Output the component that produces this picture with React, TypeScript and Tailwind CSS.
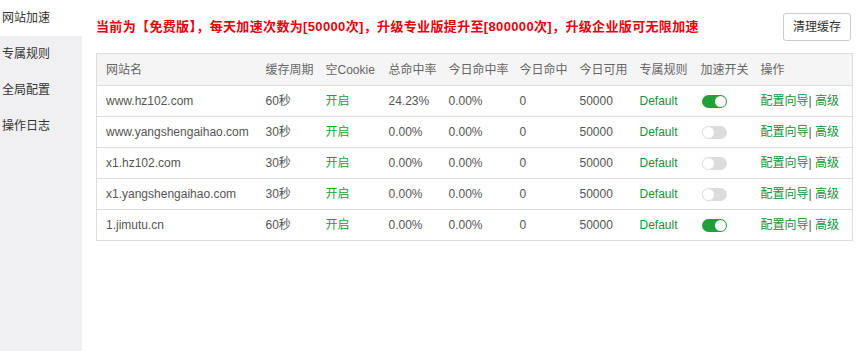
import React from 'react';

type Row = {
  name: string;
  period: string;
  total: string;
  today: string;
  hits: string;
  avail: string;
  on: boolean;
};

const rows: Row[] = [
  { name: 'www.hz102.com', period: '60秒', total: '24.23%', today: '0.00%', hits: '0', avail: '50000', on: true },
  { name: 'www.yangshengaihao.com', period: '30秒', total: '0.00%', today: '0.00%', hits: '0', avail: '50000', on: false },
  { name: 'x1.hz102.com', period: '30秒', total: '0.00%', today: '0.00%', hits: '0', avail: '50000', on: false },
  { name: 'x1.yangshengaihao.com', period: '30秒', total: '0.00%', today: '0.00%', hits: '0', avail: '50000', on: false },
  { name: '1.jimutu.cn', period: '60秒', total: '0.00%', today: '0.00%', hits: '0', avail: '50000', on: true },
];

const menu = ['网站加速', '专属规则', '全局配置', '操作日志'];

const headers = ['网站名', '缓存周期', '空Cookie', '总命中率', '今日命中率', '今日命中', '今日可用', '专属规则', '加速开关', '操作'];
const widths = ['w-[160px]', 'w-[60px]', 'w-[63px]', 'w-[60px]', 'w-[71px]', 'w-[60px]', 'w-[60px]', 'w-[61px]', 'w-[60px]', ''];

const Toggle = ({ on }: { on: boolean }) => (
  <span
    className={`relative inline-block w-[25px] h-[13px] rounded-full align-middle ${on ? 'bg-[#20a03a]' : 'bg-[#dcdcdc]'}`}
  >
    <span
      className={`absolute top-[1px] w-[11px] h-[11px] rounded-full bg-white ${on ? 'left-[13px]' : 'left-[1px]'}`}
    />
  </span>
);

const App: React.FC = () => {
  return (
    <div className="flex w-[866px] h-[351px] bg-white text-[12px] font-['Liberation_Sans','Noto_Sans_CJK_SC',sans-serif] text-[#555]">
      <aside className="w-[82px] shrink-0 bg-[#f0f0f2]">
        {menu.map((m, i) => (
          <div
            key={m}
            className={`h-[36px] leading-[36px] pl-[2px] text-[#333] ${i === 0 ? 'bg-white' : ''}`}
          >
            {m}
          </div>
        ))}
      </aside>
      <main className="flex-1 pl-[14px] pr-[13px]">
        <div className="flex items-center justify-between h-[53px] pt-[1px]">
          <div className="text-[#e8000b] font-bold text-[13px] tracking-[0.35px]">
            当前为【免费版】，每天加速次数为[50000次]，升级专业版提升至[800000次]，升级企业版可无限加速
          </div>
          <button className="h-[28px] px-[9px] border border-[#ccc] rounded-[3px] bg-white text-[#333] text-[12px] mr-[2px]">
            清理缓存
          </button>
        </div>
        <table className="w-[757px] border-collapse border border-[#ddd] table-fixed">
          <thead>
            <tr className="bg-[#f5f5f5] h-[32px] text-[#666]">
              {headers.map((h, i) => (
                <th key={h} className={`${widths[i]} font-normal text-left pl-[9px] border-b border-[#ddd]`}>
                  {h}
                </th>
              ))}
            </tr>
          </thead>
          <tbody>
            {rows.map((r) => (
              <tr key={r.name} className="h-[31px] border-b border-[#ddd]">
                <td className="pl-[9px]">{r.name}</td>
                <td className="pl-[9px]">{r.period}</td>
                <td className="pl-[9px] text-[#20a03a]">开启</td>
                <td className="pl-[9px]">{r.total}</td>
                <td className="pl-[9px]">{r.today}</td>
                <td className="pl-[9px]">{r.hits}</td>
                <td className="pl-[9px]">{r.avail}</td>
                <td className="pl-[9px] text-[#20903a]">Default</td>
                <td className="pl-[10px]">
                  <Toggle on={r.on} />
                </td>
                <td className="pl-[9px] text-[#20903a] whitespace-nowrap">
                  配置向导<span className="text-[#555]">|</span> 高级
                </td>
              </tr>
            ))}
          </tbody>
        </table>
      </main>
    </div>
  );
};

export default App;
